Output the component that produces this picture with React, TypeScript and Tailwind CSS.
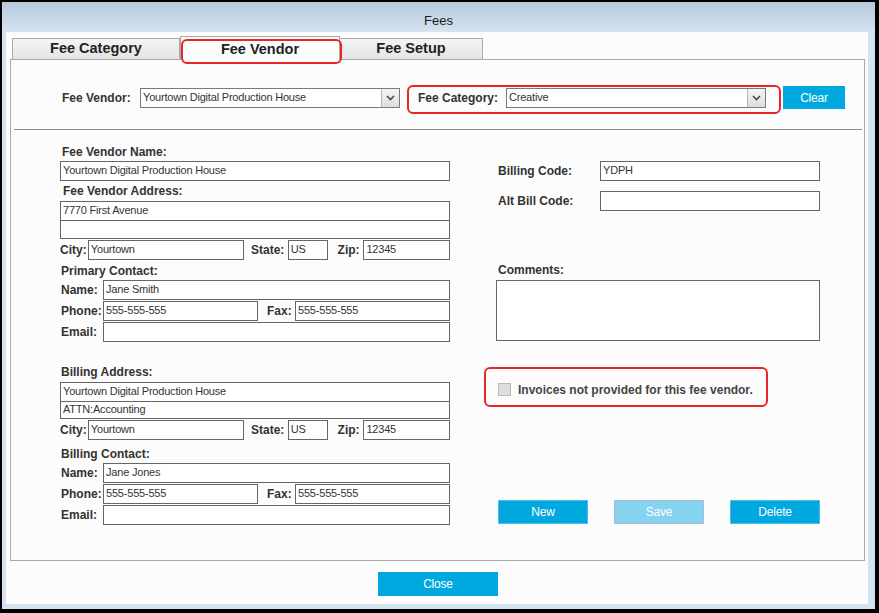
import type { ReactNode } from 'react'

const labelCls = 'text-[12px] font-bold leading-[14px] text-[#333] whitespace-nowrap'
const fieldCls =
  'h-[20px] border border-[#666] bg-white pl-[2px] pt-[1px] text-[11px] tracking-[-0.2px] leading-[15px] text-[#333] whitespace-nowrap overflow-hidden'

function Field({ value = '', w }: { value?: string; w: string }) {
  return <div className={`${fieldCls} ${w}`}>{value}</div>
}

function Label({ children, w = '' }: { children: ReactNode; w?: string }) {
  return <div className={`${labelCls} ${w}`}>{children}</div>
}

function Chevron() {
  return (
    <svg width="9" height="6" viewBox="0 0 9 6">
      <path d="M1 1l3.5 3.5L8 1" stroke="#4a4a4a" strokeWidth="1.6" fill="none" />
    </svg>
  )
}

function Dropdown({ value }: { value: string }) {
  return (
    <div className="flex h-[20px] w-[260px] border border-[#7a7a7a] bg-white">
      <div className="flex-1 pl-[2px] pt-[1px] text-[11px] tracking-[-0.2px] leading-[15px] text-[#333] whitespace-nowrap overflow-hidden">
        {value}
      </div>
      <div className="flex w-[18px] items-center justify-center border-l border-[#b4b4b4] bg-linear-to-b from-[#f4f4f4] to-[#dedede]">
        <Chevron />
      </div>
    </div>
  )
}

function AddressBox({ lines, tall }: { lines: [string, string]; tall: boolean }) {
  return (
    <div className="w-[390px] border border-[#666] bg-white text-[11px] tracking-[-0.2px] leading-[15px] text-[#333]">
      <div className="h-[19px] border-b border-[#666] pl-[2px] pt-[1px]">{lines[0]}</div>
      <div className={`${tall ? 'h-[17px]' : 'h-[16px]'} pl-[2px]`}>{lines[1]}</div>
    </div>
  )
}

function CityRow({ city, state, zip }: { city: string; state: string; zip: string }) {
  return (
    <div className="mt-[1px] flex h-[20px] items-center">
      <Label w="w-[28px]">City:</Label>
      <Field value={city} w="w-[157px]" />
      <Label w="w-[37px] ml-[7px]">State:</Label>
      <Field value={state} w="w-[40px]" />
      <Label w="w-[26px] ml-[10px]">Zip:</Label>
      <Field value={zip} w="w-[87px]" />
    </div>
  )
}

function ContactRows({ name, phone, fax, top }: { name: string; phone: string; fax: string; top: string }) {
  return (
    <>
      <div className={`${top} flex h-[20px] items-center`}>
        <Label w="w-[43px] pl-[1px]">Name:</Label>
        <Field value={name} w="w-[347px]" />
      </div>
      <div className="mt-[1px] flex h-[20px] items-center">
        <Label w="w-[43px] pl-[1px]">Phone:</Label>
        <Field value={phone} w="w-[155px]" />
        <Label w="w-[28px] ml-[9px]">Fax:</Label>
        <Field value={fax} w="w-[155px]" />
      </div>
      <div className="mt-[1px] flex h-[20px] items-center">
        <Label w="w-[43px] pl-[1px]">Email:</Label>
        <Field w="w-[347px]" />
      </div>
    </>
  )
}

function BlueButton({ children, w, faded = false }: { children: ReactNode; w: string; faded?: boolean }) {
  return (
    <div
      className={`flex h-[24px] ${w} items-center justify-center border text-[12px] tracking-[-0.2px] text-white ${
        faded ? 'border-[#a9bcc8] bg-[#86d3f1]' : 'border-[#4fbbe6] bg-[#00a8e0]'
      }`}
    >
      {children}
    </div>
  )
}

export default function App() {
  return (
    <div className="h-[613px] w-[879px] bg-black pb-[4px] pl-[2px] pr-[4px] pt-[2px] font-['Liberation_Sans',Arial,sans-serif]">
      <div className="flex h-full flex-col bg-[#d5e2ef]">
        <div className="flex h-[30px] shrink-0 items-center justify-center bg-linear-to-b from-[#b5c9db] to-[#d6e3f0] pt-[8px] text-[13px] text-[#1c1c1c]">
          Fees
        </div>

        <div className="mb-[5px] ml-[4px] mr-[7px] flex-1 bg-[#fcfcfc] pl-[4px] pt-[4px]">
          {/* tabs */}
          <div className="ml-[2px] flex h-[23px] items-end">
            <div className="flex h-[21px] w-[168px] items-center justify-center border border-b-0 border-[#a9a9a9] bg-linear-to-b from-[#f4f4f4] to-[#e4e4e4] text-[14.5px] font-bold text-[#222]">
              Fee Category
            </div>
            <div className="relative z-10 -mb-[1px] flex h-[24px] w-[160px] items-start justify-center border border-b-0 border-[#a9a9a9] bg-[#fcfcfc] pt-[2px] text-[14.5px] font-bold text-[#222]">
              Fee Vendor
              <div className="pointer-events-none absolute -bottom-[4px] -right-[3px] left-0 top-[2px] rounded-[6px] border-2 border-[#e8262a]" />
            </div>
            <div className="flex h-[21px] w-[143px] items-center justify-center border border-b-0 border-l-0 border-[#a9a9a9] bg-linear-to-b from-[#f4f4f4] to-[#e4e4e4] text-[14.5px] font-bold text-[#222]">
              Fee Setup
            </div>
          </div>

          {/* panel */}
          <div className="mr-[3px] h-[502px] border border-[#a9a9a9] bg-[#fcfcfc]">
            <div className="mt-[26px] flex h-[23px] items-center pl-[51px]">
              <Label w="w-[78px]">Fee Vendor:</Label>
              <Dropdown value="Yourtown Digital Production House" />
              <div className="relative ml-[18px] flex h-[23px] items-center">
                <Label w="w-[88px]">Fee Category:</Label>
                <Dropdown value="Creative" />
                <div className="pointer-events-none absolute -bottom-[5px] -left-[11px] -right-[15px] -top-[1px] rounded-[6px] border-2 border-[#e8262a]" />
              </div>
              <div className="ml-[17px] flex h-[23px] w-[62px] items-center justify-center bg-[#00a8e0] text-[12px] tracking-[-0.2px] text-white">
                Clear
              </div>
            </div>

            <div className="ml-[3px] mr-[2px] mt-[20px] h-px bg-[#8c8c8c]" />

            <div className="mt-[15px] flex pl-[49px]">
              {/* left column */}
              <div className="w-[390px]">
                <Label w="h-[14px] pl-[2px]">Fee Vendor Name:</Label>
                <div className="mt-[2px]">
                  <Field value="Yourtown Digital Production House" w="w-[390px]" />
                </div>
                <Label w="mt-[3px] h-[14px] pl-[3px]">Fee Vendor Address:</Label>
                <div className="mt-[3px]">
                  <AddressBox lines={['7770 First Avenue', '']} tall />
                </div>
                <CityRow city="Yourtown" state="US" zip="12345" />
                <Label w="mt-[4px] h-[14px] pl-[1px]">Primary Contact:</Label>
                <ContactRows name="Jane Smith" phone="555-555-555" fax="555-555-555" top="mt-[2px]" />

                <Label w="mt-[23px] h-[14px] pl-[1px]">Billing Address:</Label>
                <div className="mt-[3px]">
                  <AddressBox lines={['Yourtown Digital Production House', 'ATTN:Accounting']} tall={false} />
                </div>
                <CityRow city="Yourtown" state="US" zip="12345" />
                <Label w="mt-[7px] h-[14px] pl-[1px]">Billing Contact:</Label>
                <ContactRows name="Jane Jones" phone="555-555-555" fax="555-555-555" top="mt-[2px]" />
              </div>

              {/* right column */}
              <div className="ml-[46px] w-[324px] pt-[16px]">
                <div className="flex h-[20px] items-center">
                  <Label w="w-[104px] pl-[2px]">Billing Code:</Label>
                  <Field value="YDPH" w="w-[220px]" />
                </div>
                <div className="mt-[10px] flex h-[20px] items-center">
                  <Label w="w-[104px] pl-[2px]">Alt Bill Code:</Label>
                  <Field w="w-[220px]" />
                </div>
                <Label w="mt-[52px] h-[14px] pl-[2px]">Comments:</Label>
                <div className="mt-[3px] h-[61px] w-[324px] border border-[#666] bg-white" />

                <div className="relative mt-[42px] flex h-[13px] items-center pl-[2px]">
                  <div className="h-[13px] w-[13px] border border-[#b8b8b8] bg-[#dedede]" />
                  <div className="ml-[7px] text-[12px] font-bold text-[#444] whitespace-nowrap">
                    Invoices not provided for this fee vendor.
                  </div>
                  <div className="pointer-events-none absolute -left-[12px] -top-[16px] h-[40px] w-[284px] rounded-[6px] border-2 border-[#e8262a]" />
                </div>

                <div className="mt-[104px] flex pl-[2px]">
                  <BlueButton w="w-[90px]">New</BlueButton>
                  <div className="ml-[26px]">
                    <BlueButton w="w-[90px]" faded>
                      Save
                    </BlueButton>
                  </div>
                  <div className="ml-[26px]">
                    <BlueButton w="w-[90px]">Delete</BlueButton>
                  </div>
                </div>
              </div>
            </div>
          </div>

          <div className="ml-[368px] mt-[11px] flex h-[24px] w-[120px] items-center justify-center bg-[#00a8e0] text-[12px] tracking-[-0.2px] text-white">
            Close
          </div>
        </div>
      </div>
    </div>
  )
}
